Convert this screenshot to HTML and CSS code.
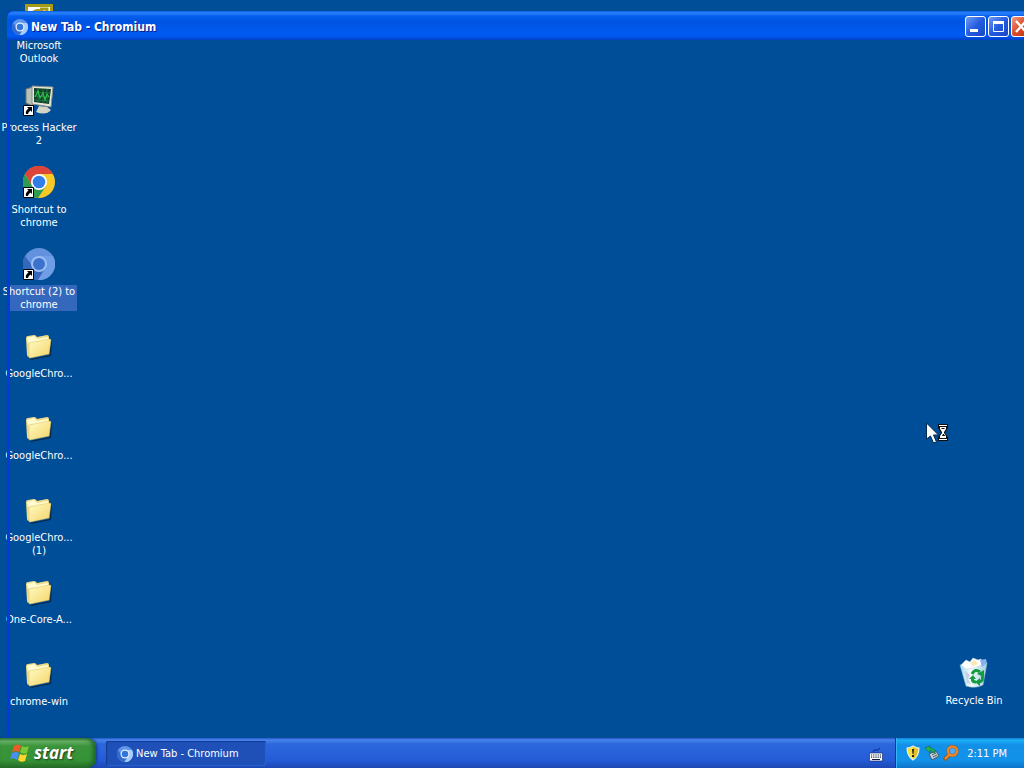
FILE: index.html
```html
<!DOCTYPE html>
<html lang="en">
<head>
<meta charset="utf-8">
<title>Desktop</title>
<link rel="stylesheet" href="styles.css">
</head>
<body>
<svg class="defs" aria-hidden="true">
  <defs>
    <linearGradient id="paper" x1="0" y1="0" x2="1" y2="1"><stop offset="0" stop-color="#fffbc4"/><stop offset="1" stop-color="#f4d468"/></linearGradient>
    <linearGradient id="bin" x1="0" x2="1"><stop offset="0" stop-color="#a8dcf0"/><stop offset=".4" stop-color="#f2fbfd"/><stop offset="1" stop-color="#a5cfe4"/></linearGradient>
    <symbol id="shortcut" viewBox="0 0 11 11"><path fill="#fff" stroke="#000" d="M.5.5h10v10H.5z"/><path d="M4 2h5v5L7.500 5.500Q5 7 5 9H3Q2 6 5.500 3.500z"/></symbol>
    <symbol id="folder" viewBox="0 0 32 32">
      <path fill="#08213a" opacity=".8" d="M5 26l2 3 20-4V9l2 1-1 16-20 4z"/>
      <path fill="#f0dc88" d="M3 8q0-2 2-2l6-1q2 0 3 2l10-2q2 0 2 2v16L6 27q-2 0-2-2z"/>
      <path fill="#fffbd0" d="M4 8l7-2 3 3 11-2v3L5 13z"/>
      <path fill="url(#paper)" stroke="#dfc263" stroke-width=".5" d="M6 13l20-4q2 0 2 1l-2 14-19 4q-1 0-1-1z"/>
    </symbol>
    <symbol id="chromium" viewBox="0 0 32 32">
      <circle cx="16" cy="16" r="16" fill="#6292dd"/>
      <path fill="#3568ba" d="M2 8A16 16 0 0 0 15 32l6-10-8 1z"/>
      <path fill="#6f9de6" d="M16 8h14a16 16 0 0 1-15 24l8-12z"/>
      <circle cx="16" cy="16" r="8" fill="#9bbef5"/><circle cx="16" cy="16" r="6" fill="#3d72cc"/>
    </symbol>
    <symbol id="chromium-small" viewBox="0 0 32 32">
      <circle cx="16" cy="16" r="16" fill="#5f97ea"/>
      <path fill="#326bd0" d="M2 8A16 16 0 0 0 15 32l6-10-8 1z"/>
      <path fill="#a9cbfa" d="M16 8h14a16 16 0 0 1-15 24l8-12z"/>
      <circle cx="16" cy="16" r="9" fill="#e3efff"/><circle cx="16" cy="16" r="6.500" fill="#3475dc"/>
    </symbol>
  </defs>
</svg>

<main class="desktop">
  <ul class="icons">
    <li><a class="item" href="#outlook">
      <svg class="icon" viewBox="0 0 32 32"><path fill="#a69a16" d="M2 2h28v28H2z"/><path fill="#fff" d="M5 5h22v22H5z"/><path fill="none" stroke="#a69a16" stroke-width="3" d="M8 12q7-7 14 0M17 7h7v5"/></svg>
      <span class="label">Microsoft Outlook</span></a></li>
    <li><a class="item" href="#process-hacker">
      <svg class="icon" viewBox="0 0 32 32"><path fill="#b9c1b5" stroke="#68777a" d="M3 5l7-2v19l-7-3z"/><path fill="#e7e7d8" stroke="#858e85" d="M9 2l21 1-2 20-19-3z"/><path fill="#123f2c" d="M11 4l17 1-2 15-15-2z"/><path stroke="#269747" stroke-width=".6" fill="none" d="M11 8l16 1M11 12l16 1M11 16l15 1M15 4v14M20 5v14M24 5v14"/><path fill="none" stroke="#2fc148" stroke-width="1.200" d="M12 13l3-6 2 7 3-5 2 7 2-6 2 3"/><path fill="#d4d4c5" d="M16 22l8 1 4 3q-5 6-15 2z"/></svg>
      <svg class="badge"><use href="#shortcut"/></svg>
      <span class="label">Process Hacker 2</span></a></li>
    <li><a class="item" href="#chrome">
      <svg class="icon" viewBox="0 0 32 32"><circle cx="16" cy="16" r="16" fill="#f7c928"/><path fill="#dd453b" d="M2 8a16 16 0 0 1 28 0H16L9 20z"/><path fill="#2b9c50" d="M2 8A16 16 0 0 0 15 32l8-12H9z"/><circle cx="16" cy="16" r="8" fill="#fff"/><circle cx="16" cy="16" r="6.300" fill="#327ee8"/></svg>
      <svg class="badge"><use href="#shortcut"/></svg>
      <span class="label">Shortcut to chrome</span></a></li>
    <li><a class="item selected" href="#chromium-app">
      <svg class="icon"><use href="#chromium"/></svg>
      <svg class="badge"><use href="#shortcut"/></svg>
      <span class="label">Shortcut (2) to chrome</span></a></li>
    <li><a class="item" href="#f1"><svg class="icon"><use href="#folder"/></svg><span class="label">GoogleChro...</span></a></li>
    <li><a class="item" href="#f2"><svg class="icon"><use href="#folder"/></svg><span class="label">GoogleChro...</span></a></li>
    <li><a class="item" href="#f3"><svg class="icon"><use href="#folder"/></svg><span class="label">GoogleChro... (1)</span></a></li>
    <li><a class="item" href="#f4"><svg class="icon"><use href="#folder"/></svg><span class="label">One-Core-A...</span></a></li>
    <li><a class="item" href="#f5"><svg class="icon"><use href="#folder"/></svg><span class="label">chrome-win</span></a></li>
  </ul>
  <a class="item recycle" href="#recycle">
    <svg class="icon" viewBox="0 0 32 32"><path fill="#06365f" opacity=".6" d="M6 27l4 4 15-2 4-20z"/><path fill="url(#bin)" stroke="#8abcd0" stroke-width=".6" d="M2 8l27-2-4 22q-8 4-17 1z"/><path fill="#fff" stroke="#c4d6de" stroke-width=".6" d="M3 8l5-5 4 2 3-4 5 2 3-1 2 5-8 4-9 1z"/><path fill="#83b1ed" d="M22 3l6-1 1 4-5 4z"/><path fill="#f7e8b5" d="M12 6l5-3 3 4-5 2z"/><path fill="#bfb6d4" opacity=".6" d="M7 14l5 4-2 4 3 5-4-1z"/><g fill="none" stroke="#149b3f" stroke-width="3"><path d="M14 17q3-6 8-2M24 19q2 5-3 6M18 25q-5 0-3-4"/></g><path fill="#149b3f" d="M19 17l7-4v7zM22 21v8l-5-4zM11 22l4-4 3 4z"/></svg>
    <span class="label">Recycle Bin</span></a>

  <section class="window" aria-label="New Tab - Chromium">
    <header class="titlebar">
      <svg class="small-icon"><use href="#chromium-small"/></svg>
      <h1 class="title">New Tab - Chromium</h1>
      <div class="controls">
        <button class="control" aria-label="Minimize"><svg viewBox="0 0 19 19"><path fill="#fff" d="M4 12h8v3H4z"/></svg></button>
        <button class="control" aria-label="Maximize"><svg viewBox="0 0 19 19"><path fill="none" stroke="#fff" d="M4.500 5.500h10v9h-10z"/><path fill="#fff" d="M4 4h11v3H4z"/></svg></button>
        <button class="control close" aria-label="Close"><svg viewBox="0 0 19 19"><path stroke="#fff" stroke-width="2.400" d="M4 4l10 11M14 4L4 15"/></svg></button>
      </div>
    </header>
  </section>
  <svg class="pointer" viewBox="0 0 24 22"><path fill="#fff" stroke="#06294a" d="M1.500 1v16l4-3 3 7 3-1-3-7h5z"/><path fill="#101010" d="M13 2h10v4l-3 5 3 4v4H13v-4l3-4-3-5z"/><path fill="#fff" d="M14 3h8v1h-8zM14 17h8v1h-8zM15 5h6v2l-2 3v1l2 3v2h-6v-2l2-3v-1l-2-3z"/><path fill="#101010" d="M16 6h4l-1 1h-2zM18 12h1v1h1v1h-3z"/></svg>
</main>

<footer class="taskbar">
  <button class="start">
    <svg class="flag" viewBox="0 0 20 20"><path fill="#f05a28" d="M4 3q4-3 7 0L9 9Q6 7 2 9z"/><path fill="#78c832" d="M12 3q4 2 7 0l-2 7q-4 2-7-1z"/><path fill="#4a8df5" d="M2 10q4-2 7 0l-2 7q-3-3-7-1z"/><path fill="#ffd52e" d="M10 11q3 2 7 0l-2 7q-4 2-7-1z"/></svg>
    <span>start</span>
  </button>
  <button class="task"><svg class="small-icon"><use href="#chromium-small"/></svg><span>New Tab - Chromium</span></button>
  <button class="keyboard" aria-label="Language bar"><svg viewBox="0 0 14 14"><path fill="none" stroke="#0b2a80" d="M4 4q1-3 3-2t4-2"/><path fill="#fff" stroke="#0b1f5c" stroke-width=".6" d="M.5 5h13v8H.5z"/><path stroke="#101c40" stroke-width="1.200" stroke-dasharray="1.200 1" d="M2 7h10M2 9.200h10"/><path stroke="#101c40" d="M3 11.500h8"/></svg></button>
  <div class="tray">
    <svg class="tray-icon" viewBox="0 0 16 16"><path fill="#f8df3a" stroke="#e8edf0" stroke-width="1.200" d="M8 1q3 2 6 2 0 8-6 12Q2 11 2 3q3 0 6-2z"/><path fill="#caa415" opacity=".5" d="M8 2q3 2 5 2 0 7-5 10z"/><path fill="#222" d="M7 4h2l-.5 5h-1zM7 10h2v2H7z"/></svg>
    <svg class="tray-icon" viewBox="0 0 16 16"><path fill="#c5d0d5" stroke="#455b67" d="M5 9l7-3 3 5-7 4z"/><path stroke="#455b67" d="M8 10l4-2M9 12l4-2"/><path fill="#28b548" stroke="#106c35" stroke-width=".6" d="M1 3l5-2v2q5 0 5 5l-2-1q-1-2-3-2v3z"/></svg>
    <svg class="tray-icon" viewBox="0 0 16 16"><path stroke="#99581e" stroke-width="4" d="M7 9l-6 6"/><circle cx="9.500" cy="6" r="4.500" fill="#53a9ee" stroke="#aa5714" stroke-width="3.200"/><circle cx="9.500" cy="6" r="4.500" fill="none" stroke="#f28b2d" stroke-width="2"/><path stroke="#f28b2d" stroke-width="2.200" d="M6.500 9.500L2 14"/></svg>
    <time class="clock">2:11 PM</time>
  </div>
</footer>
</body>
</html>
```
FILE: styles.css
```css
* { box-sizing: border-box; }

body {
  margin: 0;
  height: 100vh;
  display: flex;
  flex-direction: column;
  overflow: hidden;
  background: #004e98;
  color: #fff;
  font: 11px/13px "DejaVu Sans Condensed", Tahoma, sans-serif;
}

button {
  font: inherit;
  color: inherit;
  border: 0;
  padding: 0;
}

svg { display: block; flex: none; }
.defs { position: absolute; width: 0; height: 0; }

.desktop {
  position: relative;
  flex: 1;
  min-height: 0;
  display: flex;
  justify-content: space-between;
  align-items: flex-end;
  overflow: hidden;
}

.icons {
  align-self: flex-start;
  margin: 0;
  padding: 2px 0 0;
  list-style: none;
  display: grid;
  grid-auto-rows: 82px;
}

.item {
  position: relative;
  width: 78px;
  display: flex;
  flex-direction: column;
  align-items: center;
  gap: 5px;
  color: #fff;
  text-align: center;
  text-decoration: none;
}

.icon { width: 32px; height: 32px; }
.badge { position: absolute; left: 23px; top: 21px; width: 11px; height: 11px; }
.label { padding: 0 1px; }
.selected .label { background: linear-gradient(90deg, transparent 8px, #3468bd 8px); width: 76px; }
.recycle { margin-right: 11px; height: 81px; }

.window {
  position: absolute;
  top: 11px;
  left: 7px;
  right: -13px;
  bottom: 0;
  border-left: 3px solid #0838e0;
}

.titlebar {
  height: 29px;
  margin-left: -3px;
  padding: 2px 5px 0;
  display: flex;
  align-items: center;
  gap: 3px;
  border-radius: 7px 0 0 0;
  background: linear-gradient(#0a5fe8, #2b83ff 2px, #0560ef 5px, #0053e1 10px, #0059ef 20px, #0059f2 25px, #0040c8);
}

.small-icon { width: 16px; height: 16px; }

.title {
  flex: 1;
  margin: 0;
  font-size: 12px;
  line-height: 16px;
  text-shadow: 1px 1px #0b1c80;
}

.controls { display: flex; gap: 2px; }

.control {
  width: 21px;
  height: 21px;
  border: 1px solid #fff;
  border-radius: 3px;
  background: linear-gradient(135deg, #6f9bf5, #245ce0 50%, #1846c4);
}
.close { background: linear-gradient(135deg, #ef9a80, #dc4a26 50%, #be3310); }

.pointer { position: absolute; left: 925px; top: 422px; width: 24px; height: 22px; }

.taskbar {
  height: 30px;
  display: flex;
  align-items: stretch;
  background: linear-gradient(#2458c8, #4585ee 2px, #2d67dc 6px, #245cd8 22px, #1c48b4);
}

.start {
  width: 96px;
  padding: 0 0 1px 10px;
  display: flex;
  align-items: center;
  gap: 4px;
  border-radius: 0 9px 9px 0;
  background: linear-gradient(#388238, #69b069 3px, #3b943b 8px, #359335 22px, #286f28);
  box-shadow: inset -3px 0 4px #1d6428, 1px 0 3px #123b88;
  font: italic bold 17px/22px "Open Sans", sans-serif;
  text-shadow: 1px 1px 2px #1c3a1c;
}
.flag { width: 20px; height: 20px; }

.task {
  width: 160px;
  margin: 3px 0 2px 10px;
  padding: 0 11px;
  display: flex;
  align-items: center;
  gap: 3px;
  border-radius: 2px;
  background: #1e50b8;
  box-shadow: inset 1px 1px 1px #143a90, inset -1px -1px 1px #2b62cc;
}

.keyboard { margin-left: auto; padding: 3px 12px 0; background: none; }
.keyboard svg { width: 14px; height: 14px; }

.tray {
  width: 129px;
  padding: 0 17px 0 9px;
  display: flex;
  align-items: center;
  gap: 3px;
  border-left: 1px solid #0b3a9a;
  box-shadow: inset 1px 0 #35b4f8;
  background: linear-gradient(#0d7cd8, #1cb0f6 2px, #1290e8 7px, #1292ea 22px, #0d74c8);
}
.tray-icon { width: 16px; height: 16px; }
.clock { margin-left: auto; }
```
